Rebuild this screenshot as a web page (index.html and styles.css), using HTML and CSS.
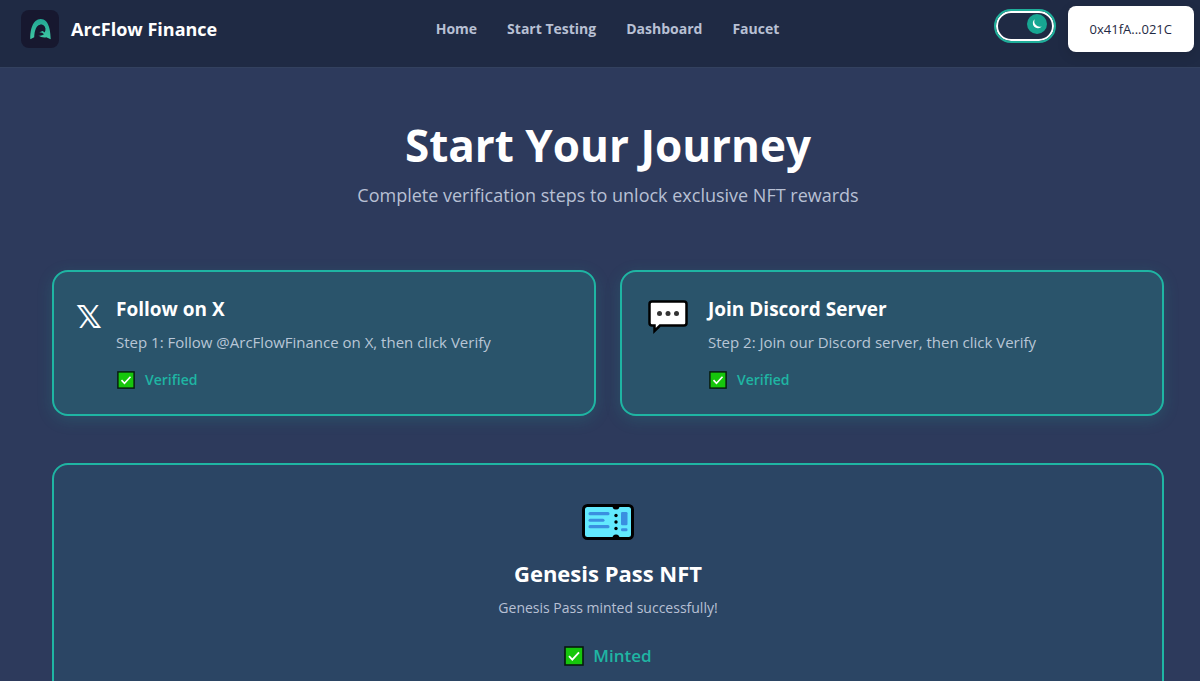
FILE: index.html
```html
<!DOCTYPE html>
<html lang="en">
<head>
<meta charset="utf-8">
<meta name="viewport" content="width=device-width, initial-scale=1">
<title>ArcFlow Finance</title>
<link rel="stylesheet" href="styles.css">
</head>
<body>
<svg class="sprite" aria-hidden="true">
  <symbol id="check" viewBox="0 0 20 20">
    <rect x="1" y="1" width="18" height="18" fill="#16c60c" stroke="#071a10" stroke-width="1.6"/>
    <path d="M5 10.2l3.3 3.4L15 6.4" fill="none" stroke="#fff" stroke-width="1.8"/>
  </symbol>
</svg>
<header class="header">
  <a class="brand" href="#">
    <svg class="brand-logo" viewBox="0 0 38 38" aria-hidden="true">
      <defs><linearGradient id="arc" x1="0" y1="0" x2="0" y2="1"><stop offset="0" stop-color="#22a894"/><stop offset="1" stop-color="#3fc8a4"/></linearGradient></defs>
      <rect width="38" height="38" rx="8" fill="#17182f"/>
      <path fill="url(#arc)" d="M9.300 29.300C9 22 10.600 14.500 14.500 11C17.500 8.200 22 8.200 25 11.200C28.500 15 29.500 22 29.700 29.300L25.300 27.300C22.500 27.800 19.500 27.200 17.300 25.500C19.500 26 21.500 25.500 23 24.300C22 23 20.500 22.400 18.300 22.300C20.500 21.600 22.300 20.500 24.300 18.500C23.500 15.500 21.700 14.200 19.700 14.500C15.500 15 13.500 20 13.200 27.300Z"/>
      <path fill="#17182f" d="M16.500 17C18 13.800 22.500 13.800 24 17.300C24.800 19.500 24.500 21 23.600 22.600C22.500 21 20.500 20.300 18.300 20.500C16.800 19.800 16 18.500 16.500 17Z"/>
    </svg>
    <span class="brand-name">ArcFlow Finance</span>
  </a>
  <nav class="nav">
    <a href="#">Home</a>
    <a href="#">Start Testing</a>
    <a href="#">Dashboard</a>
    <a href="#">Faucet</a>
  </nav>
  <div class="actions">
    <button class="theme" type="button" aria-label="Toggle dark mode">
      <svg class="theme-knob" viewBox="0 0 20 20" aria-hidden="true">
        <circle cx="10" cy="10" r="10" fill="#17a692"/>
        <path d="M7.800 5.200A5 5 0 1 0 14.800 12.200A5.300 5.300 0 0 1 7.800 5.200Z" fill="#fff"/>
      </svg>
    </button>
    <button class="wallet" type="button">0x41fA...021C</button>
  </div>
</header>
<main class="main">
  <section class="hero">
    <h1>Start Your Journey</h1>
    <p>Complete verification steps to unlock exclusive NFT rewards</p>
  </section>
  <section class="steps">
    <article class="card step">
      <span class="step-x">𝕏</span>
      <div class="step-body">
        <h2>Follow on X</h2>
        <p>Step 1: Follow @ArcFlowFinance on X, then click Verify</p>
        <div class="status"><svg class="check" aria-hidden="true"><use href="#check"/></svg>Verified</div>
      </div>
    </article>
    <article class="card step">
      <svg class="step-chat" viewBox="0 0 48 40" aria-hidden="true">
        <path d="M8 5.500H40Q42.500 5.500 42.500 8V27Q42.500 29.500 40 29.500H16L10.500 35V29.500H8Q5.500 29.500 5.500 27V8Q5.500 5.500 8 5.500Z" fill="#fff" stroke="#000" stroke-width="2.500"/>
        <g fill="#333"><circle cx="15.500" cy="17.500" r="2.500"/><circle cx="24" cy="17.500" r="2.500"/><circle cx="32.500" cy="17.500" r="2.500"/></g>
      </svg>
      <div class="step-body">
        <h2>Join Discord Server</h2>
        <p>Step 2: Join our Discord server, then click Verify</p>
        <div class="status"><svg class="check" aria-hidden="true"><use href="#check"/></svg>Verified</div>
      </div>
    </article>
  </section>
  <section class="card pass">
    <svg class="ticket" viewBox="0 0 52 36" aria-hidden="true">
      <rect x="1.500" y="1.500" width="49" height="33" rx="4" fill="#62e9fd" stroke="#000" stroke-width="3"/>
      <path d="M30.500 2a3.500 3.500 0 0 0 7 0ZM30.500 34a3.500 3.500 0 0 1 7 0Z" fill="#000"/>
      <circle cx="34" cy="11.500" r="1.700"/><circle cx="34" cy="18" r="1.700"/><circle cx="34" cy="24.500" r="1.700"/>
      <g fill="#3a8fe0"><rect x="6.500" y="8" width="21" height="3.300" rx="1.500"/><rect x="6.500" y="14.700" width="16" height="3" rx="1.500"/><rect x="6.500" y="21" width="21" height="3.300" rx="1.500"/><rect x="39" y="8" width="6.500" height="13.300" rx="1.300"/><rect x="39" y="24.300" width="6.500" height="3" rx="1.300"/></g>
    </svg>
    <h2>Genesis Pass NFT</h2>
    <p>Genesis Pass minted successfully!</p>
    <div class="status status-large"><svg class="check" aria-hidden="true"><use href="#check"/></svg>Minted</div>
  </section>
</main>
</body>
</html>
```
FILE: styles.css
```css
* { box-sizing: border-box; }
body {
  margin: 0;
  min-height: 100vh;
  background: #2d3a5c;
  color: #fff;
  font-family: "Open Sans", "Noto Sans", sans-serif;
  overflow-x: hidden;
}
h1, h2, p { margin: 0; }
a { color: inherit; text-decoration: none; }
button { font: inherit; cursor: pointer; }
.sprite { display: none; }

.header {
  display: grid;
  grid-template-columns: 1fr auto 1fr;
  align-items: center;
  padding: 6px 6px 15px 21px;
  background: #1f2a44;
  border-bottom: 1px solid #33415f;
}
.brand { display: flex; align-items: center; gap: 12px; }
.brand-logo { width: 38px; height: 38px; }
.brand-name { font-size: 18px; font-weight: 700; line-height: 24px; }
.nav {
  display: flex;
  gap: 30px;
  color: #b8c0d4;
  font-size: 14px;
  font-weight: 700;
  line-height: 20px;
}
.actions {
  display: flex;
  justify-content: flex-end;
  align-items: flex-start;
  gap: 12px;
}
.theme {
  display: flex;
  justify-content: flex-end;
  width: 62px;
  height: 34px;
  margin-top: 3px;
  padding: 3px 7px;
  border: 2px solid #1fae9a;
  border-radius: 17px;
  background: #1f2a44;
  box-shadow: inset 0 0 0 2px #fff;
}
.theme-knob { width: 20px; height: 20px; }
.wallet {
  height: 46px;
  padding: 0 22px;
  border: 0;
  border-radius: 8px;
  background: #fff;
  color: #1f2a44;
  font-size: 13px;
  font-weight: 500;
  box-shadow: 0 4px 12px rgba(0, 0, 0, 0.12);
}

.main { padding: 47px 36px 48px 52px; }
.hero { text-align: center; margin-bottom: 60px; }
.hero h1 { font-size: 44px; font-weight: 700; line-height: 60px; }
.hero p { margin-top: 5px; color: #b8c0d4; font-size: 18px; line-height: 30px; }

.card { border: 2px solid #1fb5a3; border-radius: 16px; }
.steps {
  display: grid;
  grid-template-columns: 1fr 1fr;
  gap: 24px;
  margin-bottom: 47px;
}
.step {
  display: flex;
  gap: 16px;
  padding: 22px;
  background: #2a546b;
  box-shadow: 0 4px 16px rgba(31, 181, 163, 0.18);
}
.step-x {
  width: 24px;
  font-family: "DejaVu Sans", sans-serif;
  font-size: 32px;
  font-weight: 700;
  line-height: 46px;
}
.step-chat { width: 48px; height: 40px; margin-top: 2px; }
.step h2 { font-size: 19px; font-weight: 700; line-height: 30px; }
.step p { margin-top: 6px; color: #b8c6d6; font-size: 15px; line-height: 24px; }
.status {
  display: flex;
  align-items: center;
  gap: 9px;
  margin-top: 14px;
  color: #1fb5a3;
  font-size: 14px;
  font-weight: 600;
  line-height: 24px;
}
.check { width: 20px; height: 20px; padding: 1px; }

.pass {
  display: flex;
  flex-direction: column;
  align-items: center;
  padding: 39px 24px 48px;
  background: #2b4564;
}
.ticket { width: 52px; height: 36px; }
.pass h2 { margin-top: 17px; font-size: 22px; font-weight: 700; line-height: 32px; }
.pass p { margin-top: 7px; color: #b8c0d4; font-size: 14px; line-height: 24px; }
.status-large { margin-top: 24px; font-size: 17px; }
.status-large .check { padding: 0; }
```
